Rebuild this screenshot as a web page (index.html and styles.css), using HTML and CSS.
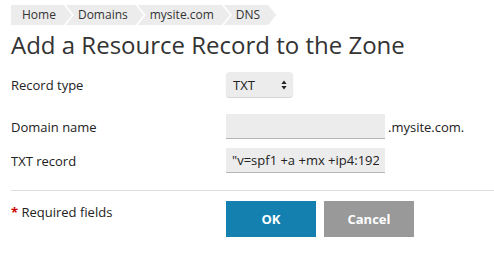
FILE: index.html
```html
<!DOCTYPE html>
<html lang="en">
<head>
<meta charset="utf-8">
<title>Add a Resource Record to the Zone</title>
<link rel="stylesheet" href="styles.css">
</head>
<body>
<div class="page">
  <nav class="crumbs">
    <a class="crumb first" href="#">Home</a>
    <a class="crumb" href="#">Domains</a>
    <a class="crumb" href="#">mysite.com</a>
    <a class="crumb" href="#">DNS</a>
  </nav>
  <h1 class="title">Add a Resource Record to the Zone</h1>
  <form class="form">
    <div class="row row-type">
      <label class="label" for="type">Record type</label>
      <div class="field">
        <span class="select-wrap">
          <select id="type" class="select">
            <option>TXT</option>
          </select>
          <svg class="select-arrow" width="6" height="10" viewBox="0 0 6 10"><path d="M3 0.5 L5.6 4 L0.4 4 Z M3 9.5 L5.6 6 L0.4 6 Z" fill="#222"/></svg>
        </span>
      </div>
    </div>
    <div class="row row-domain">
      <label class="label" for="domain">Domain name</label>
      <div class="field">
        <input id="domain" class="input" type="text" value="">
        <span class="suffix">.mysite.com.</span>
      </div>
    </div>
    <div class="row row-txt">
      <label class="label" for="txt">TXT record</label>
      <div class="field">
        <input id="txt" class="input" type="text" value="&quot;v=spf1 +a +mx +ip4:192.168.0.1 ~all&quot;">
      </div>
    </div>
    <div class="actions">
      <div class="required"><span class="star">*</span> Required fields</div>
      <div class="buttons">
        <button type="button" class="btn btn-ok">OK</button>
        <button type="button" class="btn btn-cancel">Cancel</button>
      </div>
    </div>
  </form>
</div>
</body>
</html>
```
FILE: styles.css
```css
* { box-sizing: border-box; }
html, body { margin: 0; padding: 0; background: #fff; }
body {
  font-family: "Open Sans", "Noto Sans", sans-serif;
  color: #222;
  font-size: 13px;
}
.page { padding: 5px 0 0 11px; }

.crumbs { display: flex; height: 20px; }
.crumb {
  display: block;
  height: 20px;
  line-height: 20px;
  font-size: 12px;
  color: #333;
  text-decoration: none;
  background: #ececec;
  padding: 0 16px 0 12px;
  margin-left: -6px;
  clip-path: polygon(0 0, calc(100% - 8px) 0, 100% 50%, calc(100% - 8px) 100%, 0 100%, 8px 50%);
}
.crumb.first {
  margin-left: 0;
  padding-left: 11px;
  clip-path: polygon(0 0, calc(100% - 8px) 0, 100% 50%, calc(100% - 8px) 100%, 0 100%);
}

.title {
  margin: 5px 0 0 0;
  font-size: 24px;
  line-height: 30px;
  font-weight: 400;
  color: #333;
}

.form { margin-top: 12px; }
.row { display: flex; align-items: center; }
.row-domain { margin-top: 17px; }
.row-txt { margin-top: 9px; }
.label { width: 215px; flex: none; }
.field { display: flex; align-items: center; }

.select-wrap { position: relative; display: inline-block; }
.select {
  appearance: none;
  -webkit-appearance: none;
  width: 67px;
  height: 25px;
  border: none;
  border-radius: 4px;
  background: #ececec;
  box-shadow: 0 1px 1px rgba(0,0,0,0.18);
  font: inherit;
  color: #222;
  padding: 0 0 0 7px;
}
.select-arrow { position: absolute; right: 6px; top: 8px; pointer-events: none; }

.input {
  width: 159px;
  height: 25px;
  border: none;
  border-bottom: 1px solid #b5b5b5;
  background: #ececec;
  font: inherit;
  color: #222;
  padding: 0 6px;
}
.suffix { margin-left: 3px; }

.actions {
  display: flex;
  margin-top: 17px;
  border-top: 1px solid #ddd;
  padding-top: 10px;
}
.required { width: 215px; flex: none; padding-top: 2px; line-height: 18px; }
.star { color: #c00; font-weight: 700; }
.buttons { display: flex; gap: 8px; }
.btn {
  width: 90px;
  height: 36px;
  border: none;
  color: #fff;
  font-family: inherit;
  font-size: 13px;
  font-weight: 700;
  cursor: pointer;
}
.btn-ok { background: #1380b0; }
.btn-cancel { background: #999; }
```
